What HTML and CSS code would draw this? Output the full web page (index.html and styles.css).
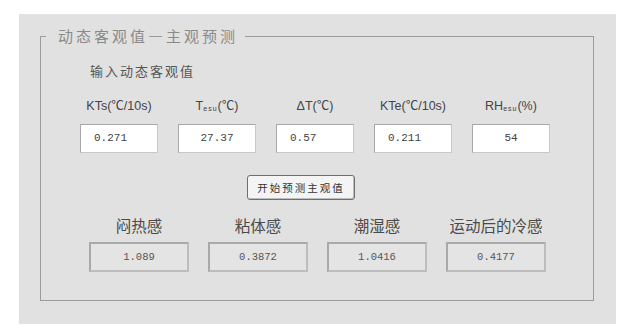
FILE: index.html
```html
<!DOCTYPE html>
<html lang="zh">
<head>
    <meta charset="UTF-8">
    <title>动态客观值—主观预测</title>
    <link rel="stylesheet" href="styles.css">
</head>
<body>
<div class="panel">
    <fieldset class="group">
        <legend>动态客观值—主观预测</legend>

        <div class="body">
            <div class="sub">输入动态客观值</div>

            <div class="inputs">
                <div class="col">
                    <div class="lbl">KTs(℃/10s)</div>
                    <div class="box">0.271</div>
                </div>
                <div class="col">
                    <div class="lbl">T<sub>esu</sub>(℃)</div>
                    <div class="box mid">27.37</div>
                </div>
                <div class="col">
                    <div class="lbl">ΔT(℃)</div>
                    <div class="box">0.57</div>
                </div>
                <div class="col">
                    <div class="lbl">KTe(℃/10s)</div>
                    <div class="box">0.211</div>
                </div>
                <div class="col">
                    <div class="lbl">RH<sub>esu</sub>(%)</div>
                    <div class="box mid">54</div>
                </div>
            </div>

            <div class="btn">开始预测主观值</div>

            <div class="outputs">
                <div class="col wide">
                    <div class="name">闷热感</div>
                    <div class="res">1.089</div>
                </div>
                <div class="col wide">
                    <div class="name">粘体感</div>
                    <div class="res">0.3872</div>
                </div>
                <div class="col wide">
                    <div class="name">潮湿感</div>
                    <div class="res">1.0416</div>
                </div>
                <div class="col wide">
                    <div class="name">运动后的冷感</div>
                    <div class="res">0.4177</div>
                </div>
            </div>
        </div>
    </fieldset>
</div>
</body>
</html>
```

FILE: styles.css
```css
* {
    margin: 0;
    padding: 0;
    box-sizing: border-box;
}

body {
    background: #fff;
    font-family: "Liberation Sans", "Noto Sans CJK SC", sans-serif;
    color: #3a3a3a;
}

.panel {
    width: 597px;
    height: 310px;
    margin: 14px 0 0 19px;
    background: #e1e1e1;
    padding: 12px 22px 0 21px;
}

.group {
    height: 275px;
    border: 1px solid #9c9c9c;
    padding: 0;
}

.group legend {
    margin-left: 5px;
    padding: 0 7px 0 12px;
    height: 20px;
    line-height: 20px;
    font-family: "Noto Sans CJK SC", sans-serif;
    font-size: 15px;
    letter-spacing: 3px;
    color: #8a8a8a;
}

.body {
    padding-left: 39px;
}

.sub {
    margin: 16px 0 0 10px;
    line-height: 18px;
    font-family: "Noto Sans CJK SC", sans-serif;
    font-size: 13px;
    letter-spacing: 2px;
    color: #555;
}

.inputs {
    display: flex;
    gap: 20px;
    margin-top: 18px;
}

.outputs {
    display: flex;
    gap: 19px;
    margin: 15px 0 0 9px;
}

.col {
    width: 78px;
    display: flex;
    flex-direction: column;
    align-items: center;
}

.col.wide {
    width: 100px;
}

.lbl {
    height: 16px;
    line-height: 16px;
    font-size: 12.5px;
    color: #444;
    white-space: nowrap;
}

.lbl sub {
    font-size: 7px;
    vertical-align: -1px;
    letter-spacing: 1px;
}

.box {
    width: 78px;
    height: 29px;
    margin-top: 10px;
    background: #fff;
    border: 1px solid #a8a8a8;
    border-right-color: #c8c8c8;
    border-bottom-color: #c8c8c8;
    line-height: 27px;
    padding-left: 13px;
    font-family: "Liberation Mono", monospace;
    font-size: 11px;
    color: #444;
}

.box.mid {
    padding-left: 0;
    text-align: center;
}

.btn {
    width: 108px;
    height: 25px;
    margin: 22px 0 0 167px;
    border: 1px solid #6e6e6e;
    border-radius: 3px;
    background: #f4f4f4;
    box-shadow: inset -1px -1px 0 #bdbdbd;
    text-align: center;
    line-height: 23px;
    font-family: "Noto Sans CJK SC", sans-serif;
    font-size: 10.5px;
    letter-spacing: 2px;
    color: #333;
}

.name {
    height: 20px;
    line-height: 20px;
    font-family: "Noto Sans CJK SC", sans-serif;
    font-size: 15.5px;
    color: #4a4a4a;
    white-space: nowrap;
}

.res {
    width: 100px;
    height: 30px;
    margin-top: 7px;
    background: #e4e4e4;
    border: 2px solid #a9a9a9;
    border-right-color: #bdbdbd;
    border-bottom-color: #bdbdbd;
    text-align: center;
    line-height: 26px;
    font-family: "Liberation Mono", monospace;
    font-size: 10.5px;
    color: #555;
}
```
